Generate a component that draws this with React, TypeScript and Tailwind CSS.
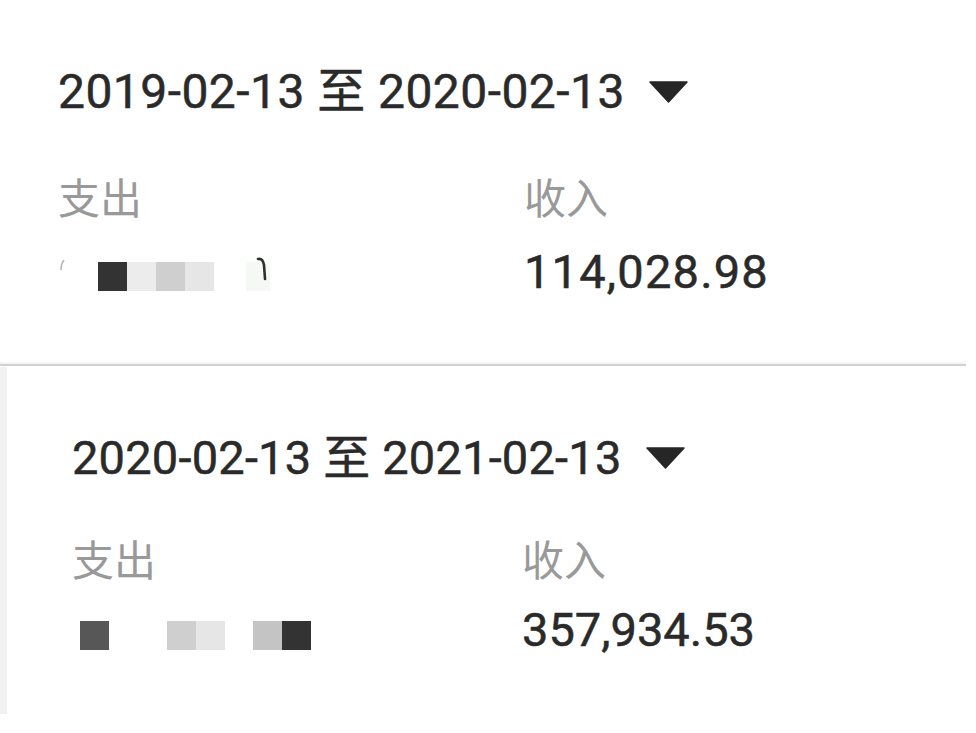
import React from "react"

const Caret = () => (
  <svg width="39" height="22" viewBox="0 0 39 22" className="ml-[24px] shrink-0">
    <path d="M1 1 H38 L19.5 21 Z" fill="#262626" stroke="#262626" strokeWidth="1.5" strokeLinejoin="round" />
  </svg>
)

const Sq = ({ c }: { c: string }) => <div className={`w-[29px] h-[29px] ${c}`} />

export default function App() {
  const font = { fontFamily: "Roboto, 'Noto Sans CJK SC', sans-serif" }

  return (
    <div className="w-[976px] h-[733px] bg-white overflow-hidden" style={font}>
      {/* period 1 */}
      <div className="w-[966px] h-[366px] relative">
        <div className="pl-[58px] pt-[64px]">
          <div className="flex items-center text-[48px] leading-[56px] tracking-[0.45px] text-[#2a2a2a] [-webkit-text-stroke:0.5px_#2a2a2a]">
            <span>2019-02-13 至 2020-02-13</span>
            <Caret />
          </div>
          <div className="grid grid-cols-[466px_1fr] mt-[59px]">
            <div className="text-[42px] leading-[42px] text-[#999]">支出</div>
            <div className="text-[42px] leading-[42px] text-[#999]">收入</div>
            <div className="flex items-center h-[54px] mt-[24px] pt-[8px]">
              <svg width="8" height="12" viewBox="0 0 8 12" className="-mt-[22px]">
                <path d="M6 1 Q3 5 3 11" stroke="#b5b5b5" strokeWidth="1.6" fill="none" />
              </svg>
              <div className="flex ml-[32px]">
                <Sq c="bg-[#333333]" />
                <Sq c="bg-[#ececec]" />
                <Sq c="bg-[#cfcfcf]" />
                <Sq c="bg-[#e6e6e6]" />
              </div>
              <div className="w-[24px] h-[29px] bg-[#f6f8f6] ml-[32px]" />
              <svg width="12" height="28" viewBox="0 0 12 28" className="-ml-[14px] -mt-[14px]">
                <path d="M2 4 Q7 3 8 10 L9 24" stroke="#2e2e2e" strokeWidth="2.6" fill="none" strokeLinecap="round" />
              </svg>
            </div>
            <div className="h-[54px] mt-[24px] text-[47px] leading-[54px] tracking-[1.2px] text-[#2a2a2a] [-webkit-text-stroke:0.5px_#2a2a2a]">
              114,028.98
            </div>
          </div>
        </div>
        <div className="absolute left-0 right-0 bottom-[2px] h-[3px] bg-gradient-to-b from-white to-[#f0f0f0]" />
        <div className="absolute left-0 right-0 bottom-0 h-[2px] bg-[#d2d2d2]" />
      </div>

      {/* period 2 */}
      <div className="flex h-[347px] mt-[1px]">
        <div className="w-[7px] bg-[#f1f1f1]" />
        <div className="flex-1 pl-[65px] pt-[63px]">
          <div className="flex items-center text-[47px] leading-[55px] tracking-[0.2px] text-[#2a2a2a] [-webkit-text-stroke:0.5px_#2a2a2a]">
            <span>2020-02-13 至 2021-02-13</span>
            <Caret />
          </div>
          <div className="grid grid-cols-[450px_1fr] mt-[56px]">
            <div className="text-[42px] leading-[42px] text-[#999]">支出</div>
            <div className="text-[42px] leading-[42px] text-[#999]">收入</div>
            <div className="flex items-center h-[54px] mt-[20px] pt-[10px]">
              <div className="ml-[8px]">
                <Sq c="bg-[#575757]" />
              </div>
              <div className="flex ml-[58px]">
                <Sq c="bg-[#cfcfcf]" />
                <Sq c="bg-[#e6e6e6]" />
              </div>
              <div className="flex ml-[28px]">
                <Sq c="bg-[#c4c4c4]" />
                <Sq c="bg-[#333333]" />
              </div>
            </div>
            <div className="h-[54px] mt-[20px] text-[47px] leading-[54px] text-[#2a2a2a] [-webkit-text-stroke:0.5px_#2a2a2a]">
              357,934.53
            </div>
          </div>
        </div>
      </div>
    </div>
  )
}
